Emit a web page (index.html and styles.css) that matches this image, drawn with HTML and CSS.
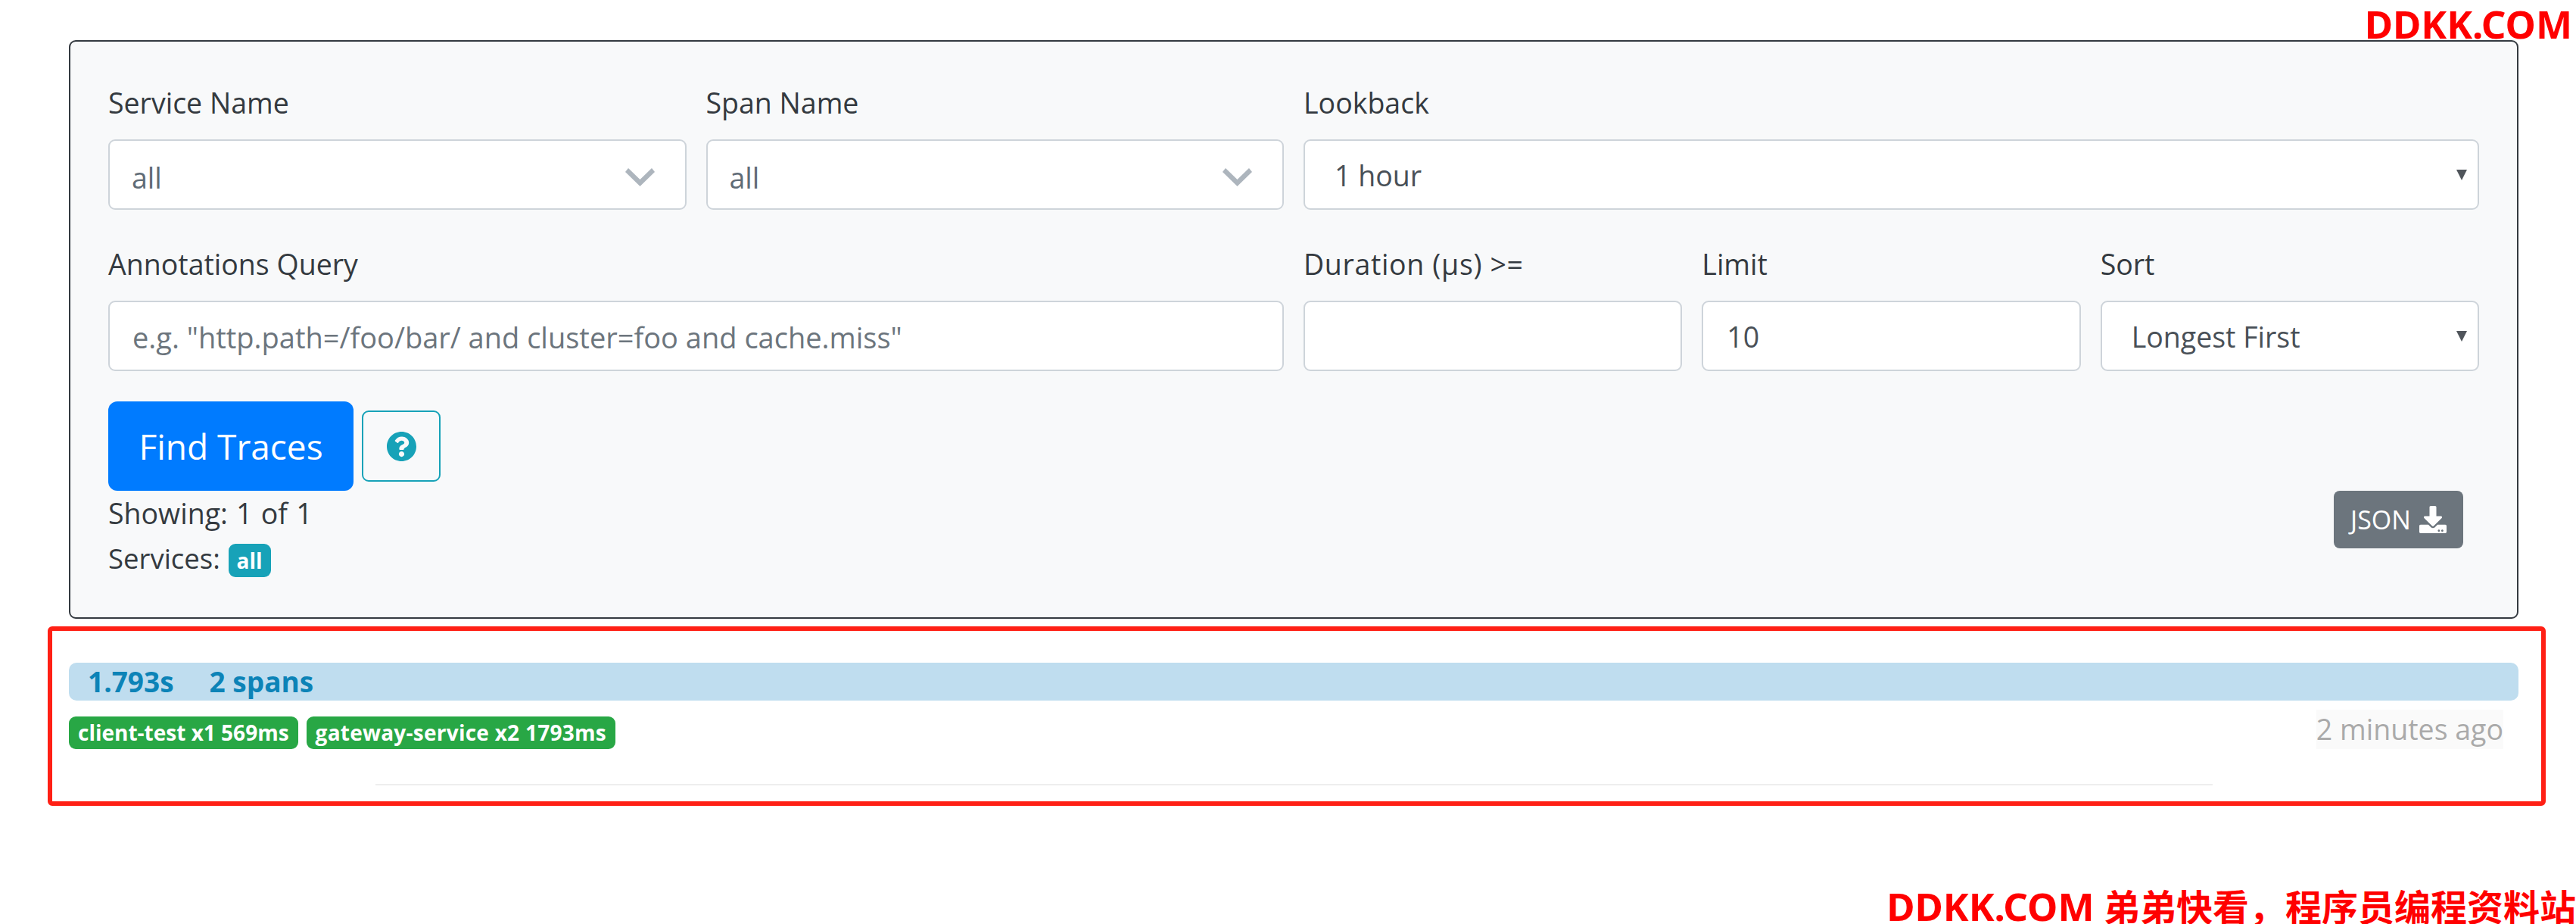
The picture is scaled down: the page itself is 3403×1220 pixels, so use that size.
FILE: index.html
```html
<!DOCTYPE html>
<html lang="en">
<head>
<meta charset="utf-8">
<title>Zipkin</title>
<link rel="stylesheet" href="styles.css">
</head>
<body>
<main class="page">
  <form class="panel">
    <div class="form-row">
      <div class="half">
        <div class="group">
          <label class="label">Service Name</label>
          <div class="control-wrap">
            <select class="control control-muted"><option>all</option></select>
            <svg class="chevron" viewBox="0 0 39 24"><path d="M4 0 19.500 15 35 0 39 5 19.500 24 0 5z"/></svg>
          </div>
        </div>
        <div class="group">
          <label class="label">Span Name</label>
          <div class="control-wrap">
            <select class="control control-muted"><option>all</option></select>
            <svg class="chevron" viewBox="0 0 39 24"><path d="M4 0 19.500 15 35 0 39 5 19.500 24 0 5z"/></svg>
          </div>
        </div>
      </div>
      <div class="half">
        <div class="group">
          <label class="label">Lookback</label>
          <div class="control-wrap">
            <select class="control control-native"><option>1 hour</option></select>
            <svg class="caret" viewBox="0 0 14 14"><path d="M0 0h14L7 14z"/></svg>
          </div>
        </div>
      </div>
    </div>
    <div class="form-row">
      <div class="half">
        <div class="group">
          <label class="label">Annotations Query</label>
          <input class="control control-query" placeholder='e.g. "http.path=/foo/bar/ and cluster=foo and cache.miss"'>
        </div>
      </div>
      <div class="half">
        <div class="group">
          <label class="label label-duration">Duration (μs) &gt;=</label>
          <input class="control">
        </div>
        <div class="group">
          <label class="label">Limit</label>
          <input class="control" value="10">
        </div>
        <div class="group">
          <label class="label">Sort</label>
          <div class="control-wrap">
            <select class="control control-native"><option>Longest First</option></select>
            <svg class="caret" viewBox="0 0 14 14"><path d="M0 0h14L7 14z"/></svg>
          </div>
        </div>
      </div>
    </div>
    <div class="actions">
      <button type="button" class="btn-find">Find Traces</button>
      <button type="button" class="btn-help">
        <svg class="help-icon" viewBox="8 8 496 496"><path d="M504 256c0 136.997-111.043 248-248 248S8 392.997 8 256C8 119.083 119.043 8 256 8s248 111.083 248 248zM262.655 90c-54.497 0-89.255 22.957-116.549 63.758-3.536 5.286-2.353 12.415 2.715 16.258l34.699 26.31c5.205 3.947 12.621 3.008 16.665-2.122 17.864-22.658 30.113-35.797 57.303-35.797 20.429 0 45.698 13.148 45.698 32.958 0 14.976-12.363 22.667-32.534 33.976C247.128 238.528 216 254.941 216 296v4c0 6.627 5.373 12 12 12h56c6.627 0 12-5.373 12-12v-1.333c0-28.462 83.186-29.647 83.186-106.667 0-58.002-60.165-102-116.531-102zM256 338c-25.365 0-46 20.635-46 46 0 25.364 20.635 46 46 46s46-20.636 46-46c0-25.365-20.635-46-46-46z"/></svg>
      </button>
    </div>
    <div class="summary">
      <div class="summary-text">
        <div class="summary-line summary-showing">Showing: 1 of 1</div>
        <div class="summary-line"><span class="services-label">Services:</span> <span class="badge-info">all</span></div>
      </div>
      <button type="button" class="btn-json">JSON
        <svg class="json-icon" viewBox="0 0 512 512"><path d="M216 0h80c13.300 0 24 10.700 24 24v168h87.700c17.800 0 26.700 21.500 14.100 34.100L269.700 378.300c-7.500 7.500-19.800 7.500-27.300 0L90.100 226.100c-12.600-12.600-3.700-34.100 14.100-34.100H192V24c0-13.300 10.700-24 24-24zm296 376v112c0 13.300-10.700 24-24 24H24c-13.300 0-24-10.700-24-24V376c0-13.300 10.700-24 24-24h146.700l49 49c20.100 20.100 52.500 20.100 72.600 0l49-49H488c13.300 0 24 10.700 24 24zm-124 88c0-11-9-20-20-20s-20 9-20 20 9 20 20 20 20-9 20-20zm64 0c0-11-9-20-20-20s-20 9-20 20 9 20 20 20 20-9 20-20z"/></svg>
      </button>
    </div>
  </form>
  <section class="trace">
    <div class="trace-bar"><span>1.793s</span><span>2 spans</span></div>
    <div class="trace-meta">
      <div class="trace-badges">
        <span class="badge-service">client-test x1 569ms</span>
        <span class="badge-service badge-service-wide">gateway-service x2 1793ms</span>
      </div>
      <span class="trace-time">2 minutes ago</span>
    </div>
    <hr class="trace-rule">
  </section>
</main>
<div class="highlight"></div>
<div class="mark mark-top">DDKK.COM</div>
<div class="mark mark-bottom"><span class="mark-latin">DDKK.COM</span> 弟弟快看，程序员编程资料站</div>
</body>
</html>
```

FILE: styles.css
```css
* { box-sizing: border-box; }
html, body { margin: 0; height: 1220px; overflow: hidden; background: #fff; }
body { position: relative; font-family: "Open Sans", "Noto Sans", sans-serif; font-size: 37.5px; color: #343a40; }
.page { padding: 53px 76px 0 91px; }

.panel { height: 764px; background: #f8f9fa; border: 2px solid #343a40; border-radius: 9px; padding: 50px 50px 0 50px; }
.form-row { display: grid; grid-template-columns: 1fr 1fr; gap: 26px; margin-bottom: 41px; }
.form-row + .form-row { margin-bottom: 40px; }
.half { display: grid; grid-auto-flow: column; grid-auto-columns: 1fr; gap: 26px; }
.label { display: block; height: 59px; line-height: 61px; margin-bottom: 20px; white-space: nowrap; }
.label-duration { letter-spacing: 0.65px; }
.control-wrap { position: relative; }
.control { display: block; width: 100%; height: 93px; padding: 2px 31px 0; border: 2px solid #ced4da; border-radius: 9px; background: #fff; font: inherit; color: #495057; outline: 0; appearance: none; }
.control::placeholder { color: #6c757d; opacity: 1; }
.control-query { font-size: 38px; padding-left: 30px; }
.control-muted { color: #5f6b76; padding-left: 29px; padding-top: 8px; }
.control-native { padding-left: 39px; }
.chevron { position: absolute; right: 42px; top: 38px; width: 39px; height: 24px; fill: #adb5bd; }
.caret { position: absolute; right: 16px; top: 40px; width: 14px; height: 14px; fill: #50555b; }

.actions { display: flex; align-items: center; gap: 11px; }
.btn-find { width: 324px; height: 118px; padding: 0; border: 0; border-radius: 12px; background: #007bff; color: #fff; font: inherit; font-size: 46px; }
.btn-help { display: flex; align-items: center; justify-content: center; width: 104px; height: 94px; padding: 0; border: 2px solid #17a2b8; border-radius: 9px; background: transparent; }
.help-icon { width: 39px; height: 39px; fill: #17a2b8; }

.summary { display: flex; justify-content: space-between; align-items: flex-start; padding-right: 21px; }
.summary-line { height: 59px; line-height: 59px; white-space: nowrap; }
.summary-showing { word-spacing: 1.500px; }
.services-label { font-size: 36.500px; }
.badge-info { display: inline-block; height: 44px; padding: 0 11px; margin-left: 1px; border-radius: 9px; background: #17a2b8; color: #fff; font-size: 28px; font-weight: 700; line-height: 44px; }
.btn-json { display: flex; align-items: center; justify-content: center; gap: 11px; width: 171px; height: 76px; padding: 0; border: 0; border-radius: 8px; background: #6c757d; color: #fff; font: inherit; font-size: 34px; }
.json-icon { width: 36px; height: 36px; fill: #fff; }

.trace { margin-top: 58px; }
.trace-bar { display: flex; gap: 47px; height: 50px; padding-left: 25px; border-radius: 10px; background: #bfddef; color: #0c83b7; font-size: 37px; font-weight: 700; line-height: 50px; }
.trace-meta { display: flex; justify-content: space-between; align-items: flex-start; padding: 12px 20px 0 0; }
.trace-badges { display: flex; gap: 11px; padding-top: 9px; }
.badge-service { display: block; height: 43px; padding: 0 12px; border-radius: 9px; background: #28a745; color: #fff; font-size: 28px; font-weight: 700; line-height: 42px; white-space: nowrap; }
.badge-service-wide { letter-spacing: 0.25px; }
.trace-time { display: block; height: 52px; background: #fafafa; color: #aaa; line-height: 52px; white-space: nowrap; }
.trace-rule { width: 75%; height: 2px; margin: 46px auto 0; border: 0; background: #eee; }

.highlight { position: absolute; left: 63px; top: 827px; width: 3300px; height: 237px; border: 6px solid #ff2015; border-radius: 6px; }
.mark { position: absolute; right: 5px; color: #f00; font-weight: 700; line-height: 1; white-space: nowrap; font-family: "Noto Sans", "Noto Sans CJK SC", sans-serif; }
.mark-top { top: 6px; font-size: 51px; }
.mark-bottom { top: 1171px; right: 0; font-size: 48px; }
.mark-latin { font-size: 51px; }
```
